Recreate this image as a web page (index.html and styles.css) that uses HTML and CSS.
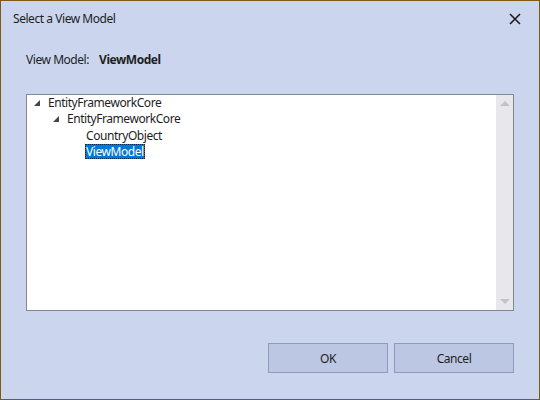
FILE: index.html
```html
<!DOCTYPE html>
<html>
<head>
<meta charset="utf-8">
<link rel="stylesheet" href="styles.css">
</head>
<body>
<div class="window">
  <div class="titlebar">
    <span class="title">Select a View Model</span>
    <svg class="close" width="12" height="12" viewBox="0 0 12 12"><path d="M1 1 L11 11 M11 1 L1 11" stroke="#1e1e1e" stroke-width="1.6" fill="none"/></svg>
  </div>
  <div class="content">
    <div class="vm-row"><span class="vm-label">View Model:</span><span class="vm-value">ViewModel</span></div>
    <div class="tree">
      <div class="tree-items">
        <div class="node lvl0"><span class="tri"></span>EntityFrameworkCore</div>
        <div class="node lvl1"><span class="tri"></span>EntityFrameworkCore</div>
        <div class="node lvl2"><span class="leaf">CountryObject</span></div>
        <div class="node lvl2"><span class="leaf selected">ViewModel</span></div>
      </div>
      <div class="scrollbar">
        <span class="arrow up"></span>
        <span class="arrow down"></span>
      </div>
    </div>
    <div class="buttons">
      <button class="btn">OK</button>
      <button class="btn">Cancel</button>
    </div>
  </div>
</div>
</body>
</html>
```
FILE: styles.css
```css
html, body { margin: 0; padding: 0; }
body { font-family: "Segoe UI", "Noto Sans", "Liberation Sans", sans-serif; font-size: 12px; letter-spacing: -0.45px; color: #1e1e1e; }
.window {
  width: 540px; height: 400px; box-sizing: border-box;
  border: 1px solid #7f5a14;
  background: #cbd5ee;
  display: flex; flex-direction: column;
}
.titlebar {
  height: 35px; display: flex; align-items: center; justify-content: space-between;
  padding: 0 18px 0 12px;
}
.title { font-size: 12px; color: #1e1e1e; }
.close { display: block; }
.content { padding: 0 25px 0 25px; display: flex; flex-direction: column; flex: 1; }
.vm-row { height: 22px; margin-top: 12px; display: flex; align-items: center; }
.vm-label { margin-right: 10px; }
.vm-value { font-weight: bold; }
.tree {
  margin-top: 24px; height: 217px; box-sizing: border-box;
  border: 1px solid #828790; background: #fff;
  display: flex;
}
.tree-items { flex: 1; padding-top: 0; }
.node { height: 16px; line-height: 16px; display: flex; align-items: center; white-space: nowrap; }
.lvl0 { padding-left: 7px; }
.lvl1 { padding-left: 26px; }
.lvl2 { padding-left: 58px; }
.tri {
  width: 0; height: 0; margin-right: 8px;
  border-left: 6px solid transparent; border-bottom: 6px solid #444;
}
.leaf { padding: 0 1px; line-height: 15px; }
.selected { background: #0078d7; color: #fff; outline: 1px dotted #1e1e1e; outline-offset: -1px; }
.scrollbar {
  width: 17px; background: #e8e8ec; display: flex; flex-direction: column;
  justify-content: space-between; align-items: center; padding: 6px 0;
}
.arrow { width: 0; height: 0; border-left: 5px solid transparent; border-right: 5px solid transparent; }
.up { border-bottom: 5px solid #c2c3c9; }
.down { border-top: 5px solid #c2c3c9; }
.buttons { display: flex; justify-content: flex-end; gap: 6px; margin-top: 32px; }
.btn {
  width: 120px; height: 30px; box-sizing: border-box;
  border: 1px solid #8e9bbd; background: #bcc7e3;
  font-family: inherit; font-size: 12px; letter-spacing: -0.45px; color: #1e1e1e; padding: 0;
}
```
